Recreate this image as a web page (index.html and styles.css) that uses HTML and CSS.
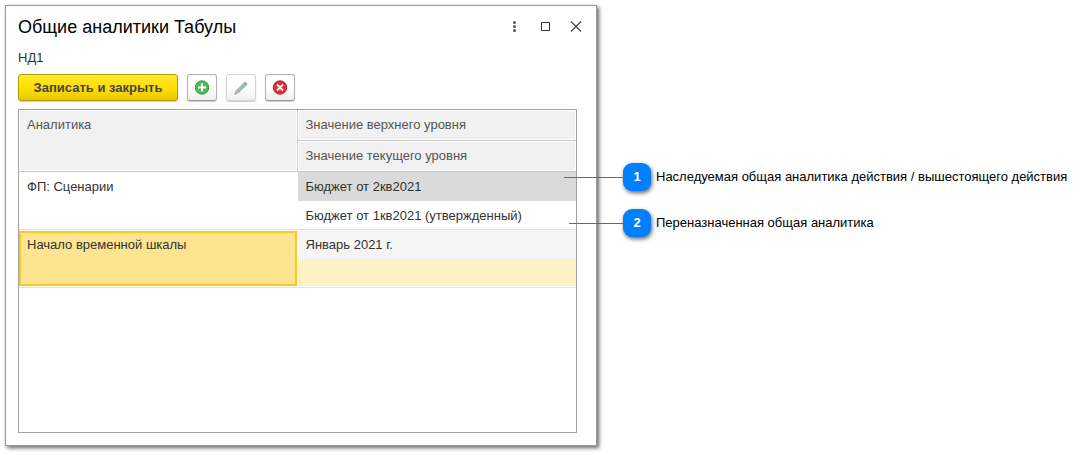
FILE: index.html
```html
<!DOCTYPE html>
<html lang="ru">
<head>
<meta charset="utf-8">
<title>Общие аналитики Табулы</title>
<link rel="stylesheet" href="styles.css">
</head>
<body>
<main class="page">
  <section class="window">
    <header class="titlebar">
      <h1 class="title">Общие аналитики Табулы</h1>
      <div class="window-controls">
        <button class="control" type="button" aria-label="Ещё">
          <svg width="16" height="16" viewBox="0 0 16 16" fill="#555"><circle cx="8.500" cy="3.500" r="1.500"/><circle cx="8.500" cy="7.500" r="1.500"/><circle cx="8.500" cy="11.500" r="1.500"/></svg>
        </button>
        <button class="control" type="button" aria-label="Развернуть">
          <svg width="16" height="16" viewBox="0 0 16 16" fill="none" stroke="#333"><path d="M4.500 3.500h8v8h-8z"/></svg>
        </button>
        <button class="control" type="button" aria-label="Закрыть">
          <svg width="16" height="16" viewBox="0 0 16 16" fill="none" stroke="#444" stroke-width="1.200"><path d="M3 2.500l10 10M13 2.500l-10 10"/></svg>
        </button>
      </div>
    </header>
    <p class="subtitle">НД1</p>
    <div class="toolbar">
      <button class="button button-primary" type="button">Записать и закрыть</button>
      <button class="button button-icon" type="button" aria-label="Добавить">
        <svg width="16" height="16" viewBox="0 0 16 16"><circle cx="8" cy="7.500" r="6.700" fill="#4fba58" stroke="#2f9a40"/><path d="M8 3.500v8M4 7.500h8" stroke="#fff" stroke-width="2"/></svg>
      </button>
      <button class="button button-icon" type="button" aria-label="Изменить" disabled>
        <svg width="16" height="16" viewBox="0 0 16 16"><path d="M1.500 14.500l1.300-4 7-7 2.800 2.800-7 7z" fill="#a9bfa9"/><path d="M1.500 14.500l1.300-4 2.800 2.800z" fill="#c5b79f"/><path d="M1.500 14.500l.5-1.600 1.100 1.100z" fill="#777"/><path d="M9.800 3.500l1.500-1.500q.8-.6 1.500 0l1.300 1.300q.6.700 0 1.500l-1.500 1.500z" fill="#9aabb8"/><path d="M4.600 12.300l6.800-7" stroke="#91aa96"/></svg>
      </button>
      <button class="button button-icon" type="button" aria-label="Удалить">
        <svg width="16" height="16" viewBox="0 0 16 16"><circle cx="8" cy="7.500" r="6.700" fill="#dc3035" stroke="#bd2026"/><path d="M5 4.500l6 6M11 4.500l-6 6" stroke="#fff" stroke-width="1.800"/></svg>
      </button>
    </div>
    <div class="grid-panel">
      <table class="grid">
        <thead>
          <tr><th rowspan="2" class="split">Аналитика</th><th>Значение верхнего уровня</th></tr>
          <tr><th>Значение текущего уровня</th></tr>
        </thead>
        <tbody>
          <tr><td rowspan="2" class="last">ФП: Сценарии</td><td class="inherited">Бюджет от 2кв2021</td></tr>
          <tr><td class="last">Бюджет от 1кв2021 (утвержденный)</td></tr>
          <tr><td rowspan="2" class="last current">Начало временной шкалы</td><td class="muted">Январь 2021 г.</td></tr>
          <tr><td class="last highlighted"></td></tr>
        </tbody>
      </table>
    </div>
  </section>
  <ol class="callouts">
    <li class="callout"><span class="badge badge-long">1</span><span>Наследуемая общая аналитика действия / вышестоящего действия</span></li>
    <li class="callout"><span class="badge">2</span><span>Переназначенная общая аналитика</span></li>
  </ol>
</main>
</body>
</html>
```
FILE: styles.css
```css
* { box-sizing: border-box; }
body {
  margin: 0;
  background: #fff;
  color: #333;
  font: 13px/16px "Liberation Sans", Arial, sans-serif;
}
.page {
  display: flex;
  min-height: 100vh;
  padding: 5px 5px 9px;
}
.window {
  display: flex;
  flex: 0 1 592px;
  flex-direction: column;
  padding: 8px 19px 12px 12px;
  border: 1px solid #999;
  background: #fff;
  box-shadow: 2px 2px 4px #666;
}
.titlebar {
  display: flex;
  align-items: center;
  justify-content: space-between;
  height: 26px;
}
.title {
  margin: 0;
  color: #000;
  font-size: 18px;
  font-weight: 400;
  line-height: 24px;
}
.window-controls { display: flex; gap: 15px; margin-right: -7px; }
.control {
  display: flex;
  padding: 0;
  border: 0;
  background: none;
}
.subtitle { margin: 10px 0 8px; }
.toolbar { display: flex; gap: 9px; margin-bottom: 8px; }
.button {
  display: flex;
  align-items: center;
  justify-content: center;
  height: 27px;
  border: 1px solid #b3b3b3;
  border-bottom-color: #999;
  border-radius: 3px;
  background: linear-gradient(#fff 50%, #eee);
  box-shadow: 0 1px 1px #ccc;
}
.button-primary {
  width: 160px;
  padding: 0;
  border-color: #b39b00;
  background: linear-gradient(#ffe92e, #ffe000 50%, #e8c800);
  color: #444;
  font: bold 13px/16px "Liberation Sans", Arial, sans-serif;
}
.button-icon { width: 30px; padding: 0; }
.button-icon:disabled { border-color: #d3d3d3; }
.grid-panel { flex: 1; border: 1px solid #a0a0a0; }
.grid {
  width: 100%;
  border-collapse: separate;
  border-spacing: 0;
  table-layout: fixed;
}
.grid th,
.grid td {
  height: 29px;
  padding: 7px 8px 5px;
  font-weight: 400;
  text-align: left;
  vertical-align: top;
}
.grid th {
  height: 31px;
  border-bottom: 1px solid #c8c8c8;
  background: #f1f1f1;
  box-shadow: inset 0 0 0 1px #fff;
  color: #555;
}
.grid .split { border-right: 1px solid #c8c8c8; }
.grid .last { border-bottom: 1px solid #e2e2e2; }
.grid .inherited { background: #dadada; }
.grid .muted { background: #f5f5f5; }
.grid .highlighted {
  background: #fdf1c5;
  box-shadow: inset 0 -1px #fff;
}
.grid .current {
  padding-top: 6px;
  border-top: 1px solid #fff;
  border-right: 1px solid #fff;
  background: #fde491 padding-box;
  box-shadow: inset 0 -1px #fff, inset 0 -3px #f9c91f, inset 0 0 0 2px #f9c91f;
}
.callouts {
  display: flex;
  flex: 1;
  flex-direction: column;
  gap: 18px;
  margin: 158px 0 0 26px;
  padding: 0;
  color: #000;
  list-style: none;
}
.callout { display: flex; align-items: center; gap: 5px; }
.badge {
  position: relative;
  flex: none;
  width: 28px;
  border-radius: 9px;
  background: #0080ff;
  box-shadow: 1px 2px 4px #666;
  color: #fff;
  font-weight: 700;
  line-height: 28px;
  text-align: center;
}
.badge::before {
  position: absolute;
  top: 14px;
  right: 100%;
  width: 54px;
  height: 1px;
  background: #1a7ad9;
  content: "";
}
.badge-long::before { width: 59px; }
```
